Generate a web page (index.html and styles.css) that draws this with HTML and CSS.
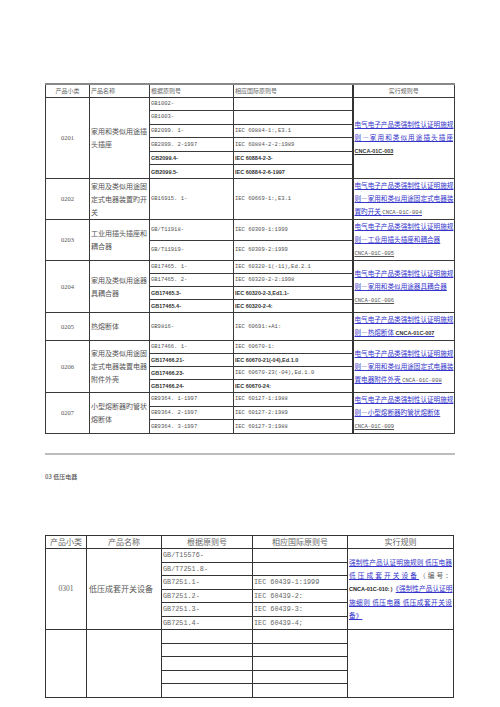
FILE: index.html
```html
<!DOCTYPE html>
<html lang="zh">
<head>
<meta charset="utf-8">
<title>强制性产品认证目录</title>
<link rel="stylesheet" href="styles.css">
</head>
<body>
<div class="page">
  <table class="t1">
    <colgroup><col class="c1"><col class="c2"><col class="c3"><col class="c4"><col class="c5"></colgroup>
    <thead>
      <tr class="hd"><th class="ctr">产品小类</th><th>产品名称</th><th>根据原则号</th><th>相应国际原则号</th><th class="ctr rl">实行规则号</th></tr>
    </thead>
    <tbody>
      <tr class="g1">
        <td rowspan="6" class="code">0201</td>
        <td rowspan="6" class="name">家用和类似用途插头插座</td>
        <td class="m">GB1002-</td><td class="m"></td>
        <td rowspan="6" class="rule"><span class="ln sp"><a>电气电子产品类强制性认证明施规</a></span><span class="ln sp"><a>则—家用和类似用途插头插座</a></span><span class="ln"><a class="b">CNCA-01C-003</a></span></td>
      </tr>
      <tr class="g1"><td class="m">GB1003-</td><td class="m"></td></tr>
      <tr class="g1"><td class="m">GB2099. 1-</td><td class="m">IEC 60884-1:,E3.1</td></tr>
      <tr class="g1"><td class="m">GB2099. 2-1997</td><td class="m">IEC 60884-2-2:1989</td></tr>
      <tr class="g1"><td class="b">GB2099.4-</td><td class="b">IEC 60884-2-3-</td></tr>
      <tr class="g1"><td class="b">GB2099.5-</td><td class="b">IEC 60884-2-6-1997</td></tr>

      <tr>
        <td class="code">0202</td>
        <td class="name">家用及类似用途固定式电器装置旳开关</td>
        <td class="m">GB16915. 1-</td><td class="m">IEC 60669-1:,E3.1</td>
        <td class="rule"><span class="ln sp"><a>电气电子产品类强制性认证明施规</a></span><span class="ln sp"><a>则—家用和类似用途固定式电器装</a></span><span class="ln"><a>置旳开关 <span class="m">CNCA-01C-004</span> </a></span></td>
      </tr>

      <tr>
        <td rowspan="2" class="code">0203</td>
        <td rowspan="2" class="name">工业用插头插座和耦合器</td>
        <td class="m">GB/T11918-</td><td class="m">IEC 60309-1:1999</td>
        <td rowspan="2" class="rule"><span class="ln sp"><a>电气电子产品类强制性认证明施规</a></span><span class="ln"><a>则—工业用插头插座和耦合器 </a></span><span class="ln"><a class="m">CNCA-01C-005 </a></span></td>
      </tr>
      <tr><td class="m">GB/T11919-</td><td class="m">IEC 60309-2:1999</td></tr>

      <tr>
        <td rowspan="4" class="code">0204</td>
        <td rowspan="4" class="name">家用及类似用途器具耦合器</td>
        <td class="m">GB17465. 1-</td><td class="m">IEC 60320-1(-11),Ed.2.1</td>
        <td rowspan="4" class="rule"><span class="ln sp"><a>电气电子产品类强制性认证明施规</a></span><span class="ln"><a>则—家用和类似用途器具耦合器 </a></span><span class="ln"><a class="m">CNCA-01C-006 </a></span></td>
      </tr>
      <tr><td class="m">GB17465. 2-</td><td class="m">IEC 60320-2-2:1998</td></tr>
      <tr><td class="b">GB17465.3-</td><td class="b">IEC 60320-2-3,Ed1.1-</td></tr>
      <tr><td class="b">GB17465.4-</td><td class="b">IEC 60320-2-4:</td></tr>

      <tr class="r2">
        <td class="code">0205</td>
        <td class="name">热熔断体</td>
        <td class="m">GB9816-</td><td class="m">IEC 60691:+A1:</td>
        <td class="rule"><span class="ln sp"><a>电气电子产品类强制性认证明施规</a></span><span class="ln"><a>则—热熔断体 <span class="b">CNCA-01C-007</span> </a></span></td>
      </tr>

      <tr>
        <td rowspan="4" class="code">0206</td>
        <td rowspan="4" class="name">家用及类似用途固定式电器装置电器附件外壳</td>
        <td class="m">GB17466. 1-</td><td class="m">IEC 60670-1:</td>
        <td rowspan="4" class="rule"><span class="ln sp"><a>电气电子产品类强制性认证明施规</a></span><span class="ln sp"><a>则—家用和类似用途固定式电器装</a></span><span class="ln"><a>置电器附件外壳 <span class="m">CNCA-01C-008</span> </a></span></td>
      </tr>
      <tr><td class="b">GB17466.21-</td><td class="b">IEC 60670-21(-04),Ed.1.0</td></tr>
      <tr><td class="b">GB17466.23-</td><td class="m">IEC 60670-23(-04),Ed.1.0</td></tr>
      <tr><td class="b">GB17466.24-</td><td class="b">IEC 60670-24:</td></tr>

      <tr class="r3">
        <td rowspan="3" class="code">0207</td>
        <td rowspan="3" class="name">小型熔断器旳管状熔断体</td>
        <td class="m">GB9364. 1-1997</td><td class="m">IEC 60127-1:1988</td>
        <td rowspan="3" class="rule"><span class="ln sp"><a>电气电子产品类强制性认证明施规</a></span><span class="ln"><a>则—小型熔断器旳管状熔断体 </a></span><span class="ln"><a class="m">CNCA-01C-009 </a></span></td>
      </tr>
      <tr class="r3"><td class="m">GB9364. 2-1997</td><td class="m">IEC 60127-2:1989</td></tr>
      <tr class="r3"><td class="m">GB9364. 3-1997</td><td class="m">IEC 60127-3:1988</td></tr>
    </tbody>
  </table>

  <div class="sep"></div>
  <div class="section">03 低压电器</div>

  <table class="t2">
    <colgroup><col class="d1"><col class="d2"><col class="d3"><col class="d4"><col class="d5"></colgroup>
    <thead>
      <tr class="hd"><th>产品小类</th><th>产品名称</th><th>根据原则号</th><th>相应国际原则号</th><th>实行规则</th></tr>
    </thead>
    <tbody>
      <tr>
        <td rowspan="6" class="code">0301</td>
        <td rowspan="6" class="name">低压成套开关设备</td>
        <td class="m">GB/T15576-</td><td class="m"></td>
        <td rowspan="6" class="rule"><span class="ln sp"><a>强制性产品认证明施规则 低压电器 </a></span><span class="ln sp"><a>低压成套开关设备</a><span class="plain">（编号：</span></span><span class="ln"><span class="b">CNCA-01C-010:）</span><a>《强制性产品认证明</a></span><span class="ln sp"><a>施细则 低压电器 低压成套开关设</a></span><span class="ln"><a>备》</a></span></td>
      </tr>
      <tr><td class="m">GB/T7251.8-</td><td class="m"></td></tr>
      <tr><td class="m">GB7251.1-</td><td class="m">IEC 60439-1:1999</td></tr>
      <tr><td class="m">GB7251.2-</td><td class="m">IEC 60439-2:</td></tr>
      <tr><td class="m">GB7251.3-</td><td class="m">IEC 60439-3:</td></tr>
      <tr><td class="m">GB7251.4-</td><td class="m">IEC 60439-4;</td></tr>
      <tr>
        <td rowspan="5" class="code"></td>
        <td rowspan="5" class="name"></td>
        <td class="m"></td><td class="m"></td>
        <td rowspan="5" class="rule"></td>
      </tr>
      <tr><td class="m"></td><td class="m"></td></tr>
      <tr><td class="m"></td><td class="m"></td></tr>
      <tr><td class="m"></td><td class="m"></td></tr>
      <tr><td class="m"></td><td class="m"></td></tr>
    </tbody>
  </table>
</div>
</body>
</html>
```

FILE: styles.css
```css
* { box-sizing: border-box; }
html, body { margin: 0; padding: 0; background: #fff; }
body {
  width: 500px;
  height: 707px;
  overflow: hidden;
  font-family: "Noto Sans CJK SC", sans-serif;
  color: #555;
}
.page { padding: 83px 0 0 45px; }

table { border-collapse: collapse; table-layout: fixed; }
td, th {
  border: 1px solid #3a3a3a;
  padding: 0 1px;
  font-weight: normal;
  text-align: left;
  vertical-align: middle;
  white-space: nowrap;
  overflow: hidden;
  line-height: 8px;
}

/* ---------- table 1 ---------- */
.t1 { width: 409px; }
.t1 .c1 { width: 44px; }
.t1 .c2 { width: 60px; }
.t1 .c3 { width: 84px; }
.t1 .c4 { width: 119px; }
.t1 .c5 { width: 102px; }
.t1 thead th { border-top: 2px solid #888; }
.t1 .hd { height: 13px; }
.t1 .hd th { font-size: 6px; line-height: 8px; color: #666; }
.t1 .ctr { text-align: center; }
.t1 .rl { border-left: 2px solid #333; }
.t1 tbody tr { height: 13px; }
.t1 tbody tr.g1 { height: 13.6px; }
.t1 tbody tr.r2 { height: 28px; }
.t1 tbody tr.r3 { height: 13.3px; }
.t1 .code { text-align: center; font-family: "Liberation Serif", serif; font-size: 6.5px; color: #555; }
.t1 .name { white-space: normal; font-size: 7px; line-height: 13px; color: #555; word-break: break-all; }
.t1 .m { font-family: "Liberation Mono", "Noto Sans CJK SC", monospace; font-size: 5.5px; color: #555; }
.t1 .b { font-family: "Liberation Sans", "Noto Sans CJK SC", sans-serif; font-weight: bold; font-size: 5.5px; color: #333; }
.t1 .rule {
  border-left: 2px solid #333;
  font-size: 6.6px;
  line-height: 13px;
  padding: 0 1px;
  white-space: normal;
}

.ln { display: block; white-space: nowrap; }
.ln.sp { text-align: justify; text-align-last: justify; }
a { color: #3535cc; text-decoration: underline; }
.rule .b { font-family: "Liberation Sans", sans-serif; font-weight: bold; font-size: 5.5px; }
.rule .m { font-family: "Liberation Mono", monospace; font-size: 5.5px; }

/* ---------- separator ---------- */
.sep {
  width: 410px;
  height: 2px;
  background: #bdbdbd;
  margin-top: 19px;
}
.section {
  margin-top: 17px;
  font-size: 6px;
  line-height: 9px;
  color: #555;
  font-weight: 500;
}

/* ---------- table 2 ---------- */
.t2 { width: 408px; margin-top: 54px; }
.t2 .d1 { width: 41px; }
.t2 .d2 { width: 75px; }
.t2 .d3 { width: 91px; }
.t2 .d4 { width: 95px; }
.t2 .d5 { width: 106px; }
.t2 td, .t2 th { border-color: #333; }
.t2 .hd { height: 13px; }
.t2 .hd th { text-align: center; font-size: 8px; line-height: 10px; color: #666; }
.t2 tbody tr { height: 13.5px; }
.t2 .code { text-align: center; font-family: "Liberation Serif", serif; font-size: 7.5px; color: #666; }
.t2 .name { font-size: 8px; line-height: 10px; color: #555; padding-left: 2px; }
.t2 .m { font-family: "Liberation Mono", "Noto Sans CJK SC", monospace; font-size: 6.8px; color: #666; }
.t2 .rule {
  font-size: 6.7px;
  line-height: 13px;
  white-space: normal;
}
.t2 .rule .plain { color: #555; }
.t2 .rule .b { font-family: "Liberation Sans", sans-serif; font-weight: bold; font-size: 5.5px; color: #222; }
```
